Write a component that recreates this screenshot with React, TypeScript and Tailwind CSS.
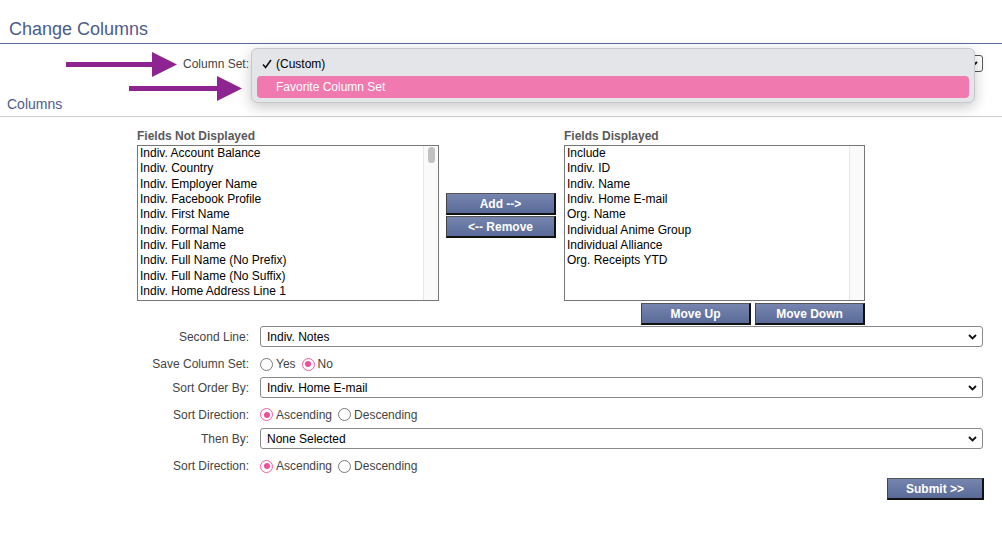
import React from "react";

const notDisplayed = [
  "Indiv. Account Balance",
  "Indiv. Country",
  "Indiv. Employer Name",
  "Indiv. Facebook Profile",
  "Indiv. First Name",
  "Indiv. Formal Name",
  "Indiv. Full Name",
  "Indiv. Full Name (No Prefix)",
  "Indiv. Full Name (No Suffix)",
  "Indiv. Home Address Line 1",
];

const displayed = [
  "Include",
  "Indiv. ID",
  "Indiv. Name",
  "Indiv. Home E-mail",
  "Org. Name",
  "Individual Anime Group",
  "Individual Alliance",
  "Org. Receipts YTD",
];

function Btn({ children, className = "" }: { children: React.ReactNode; className?: string }) {
  return (
    <button
      className={`h-[22px] border-solid border-t border-l border-r-2 border-b-2 border-t-[#555] border-l-[#444] border-r-[#111] border-b-[#111] bg-linear-to-b from-[#7585ae] to-[#5b6b99] text-white text-[12px] font-bold leading-none ${className}`}
    >
      {children}
    </button>
  );
}

function ListBox({ items, thumb, width }: { items: string[]; thumb?: boolean; width: string }) {
  return (
    <div className={`flex h-[156px] border border-[#767676] bg-white ${width}`}>
      <div className="flex-1 overflow-hidden pl-[2px] text-[12px] leading-[15.35px] text-black">
        {items.map((it) => (
          <div key={it} className="whitespace-nowrap">
            {it}
          </div>
        ))}
      </div>
      <div className="flex w-[15px] justify-center border-l border-[#e6e6e6] bg-[#fafafa] pt-[1px]">
        {thumb && <div className="h-[16px] w-[7px] rounded-full bg-[#c1c1c1]" />}
      </div>
    </div>
  );
}

function Chevron() {
  return (
    <svg width="9" height="6" viewBox="0 0 9 6">
      <path d="M1 1l3.5 3.5L8 1" fill="none" stroke="#111" strokeWidth="1.8" />
    </svg>
  );
}

function Select({ value, className = "" }: { value: string; className?: string }) {
  return (
    <div
      className={`flex h-[21px] items-center justify-between rounded-[3px] border border-[#8a8a8a] bg-white pl-[6px] pr-[5px] text-[12px] text-black ${className}`}
    >
      <span>{value}</span>
      <Chevron />
    </div>
  );
}

function Radio({ checked, label, className = "" }: { checked?: boolean; label: string; className?: string }) {
  return (
    <span className={`flex items-center ${className}`}>
      {checked ? (
        <span className="flex h-[13px] w-[13px] items-center justify-center rounded-full border-[1.5px] border-[#ee5fa2] bg-white">
          <span className="h-[6px] w-[6px] rounded-full bg-[#ec4f98]" />
        </span>
      ) : (
        <span className="h-[13px] w-[13px] rounded-full border border-[#7a7a7a] bg-white" />
      )}
      <span className="ml-[3px] text-[#444]">{label}</span>
    </span>
  );
}

function Label({ children }: { children: React.ReactNode }) {
  return <div className="w-[249px] text-right text-[#444]">{children}</div>;
}

export default function App() {
  return (
    <div className="relative h-[555px] w-full overflow-hidden bg-white font-['Liberation_Sans',Arial,sans-serif] text-[12px]">
      <h1 className="border-b border-[#5b6a98] pb-[3px] pl-[9px] pt-[18px] text-[18px] leading-[22px] text-[#4d5c8c]">
        Change Columns
      </h1>

      {/* column set row */}
      <div className="mt-[11px] flex h-[17px] items-center">
        <Label>Column Set:</Label>
        <div className="ml-[4px] flex h-[17px] w-[730px] items-center justify-end rounded-[3px] border border-[#555] bg-white pr-[4px]">
          <Chevron />
        </div>
      </div>

      <h2 className="mt-[24px] border-b border-[#cccccc] pb-[4px] pl-[7px] text-[14px] leading-[16px] text-[#4d5c8c]">
        Columns
      </h2>

      {/* field lists */}
      <div className="mt-[12px] flex pl-[137px]">
        <div>
          <div className="text-[12px] font-bold leading-[14px] text-[#5a5a5a]">Fields Not Displayed</div>
          <div className="mt-[2px]">
            <ListBox items={notDisplayed} thumb width="w-[302px]" />
          </div>
        </div>
        <div className="ml-[7px] mt-[64px] flex w-[110px] flex-col gap-[1px]">
          <Btn>Add --&gt;</Btn>
          <Btn>&lt;-- Remove</Btn>
        </div>
        <div className="ml-[8px]">
          <div className="text-[12px] font-bold leading-[14px] text-[#5a5a5a]">Fields Displayed</div>
          <div className="mt-[2px]">
            <ListBox items={displayed} width="w-[301px]" />
          </div>
          <div className="mt-[2px] flex justify-end gap-[4px]">
            <Btn className="w-[110px]">Move Up</Btn>
            <Btn className="w-[110px]">Move Down</Btn>
          </div>
        </div>
      </div>

      {/* options */}
      <div className="mt-[1px]">
        <div className="flex h-[21px] items-center">
          <Label>Second Line:</Label>
          <Select className="ml-[11px] w-[723px]" value="Indiv. Notes" />
        </div>
        <div className="flex h-[30px] items-center pt-[4px]">
          <Label>Save Column Set:</Label>
          <div className="ml-[11px] flex">
            <Radio label="Yes" />
            <Radio checked label="No" className="ml-[6px]" />
          </div>
        </div>
        <div className="flex h-[21px] items-center">
          <Label>Sort Order By:</Label>
          <Select className="ml-[11px] w-[723px]" value="Indiv. Home E-mail" />
        </div>
        <div className="flex h-[30px] items-center pt-[3px]">
          <Label>Sort Direction:</Label>
          <div className="ml-[11px] flex">
            <Radio checked label="Ascending" />
            <Radio label="Descending" className="ml-[6px]" />
          </div>
        </div>
        <div className="flex h-[21px] items-center">
          <Label>Then By:</Label>
          <Select className="ml-[11px] w-[723px]" value="None Selected" />
        </div>
        <div className="flex h-[29px] items-center pt-[5px]">
          <Label>Sort Direction:</Label>
          <div className="ml-[11px] flex">
            <Radio checked label="Ascending" />
            <Radio label="Descending" className="ml-[6px]" />
          </div>
        </div>
        <div className="flex justify-end pr-[18px]">
          <Btn className="w-[97px]">Submit &gt;&gt;</Btn>
        </div>
      </div>

      {/* open dropdown menu */}
      <div className="absolute left-[251px] top-[48px] w-[724px] rounded-[6px] border border-[#c6c8cc] bg-[#e3e5e9] pb-[4px] pt-[4px] shadow-[0_4px_14px_rgba(0,0,0,0.22)]">
        <div className="mx-[5px] flex h-[22px] items-center pl-[5px] text-[12px] text-black">
          <svg width="10" height="10" viewBox="0 0 10 10" className="mr-[4px]">
            <path d="M1 5.5l2.6 3L9 1" fill="none" stroke="#111" strokeWidth="1.6" />
          </svg>
          (Custom)
        </div>
        <div className="mx-[5px] mt-[1px] flex h-[22px] items-center rounded-[4px] bg-[#f07ab0] pl-[19px] text-[12px] text-white">
          Favorite Column Set
        </div>
      </div>

      {/* annotation arrows */}
      <svg className="absolute left-0 top-0" width="260" height="110" viewBox="0 0 260 110">
        <rect x="66" y="62" width="88" height="5" fill="#8e2491" />
        <polygon points="152,52 177,64.5 152,77" fill="#8e2491" />
        <rect x="129" y="86" width="90" height="5" fill="#8e2491" />
        <polygon points="217,76 242,88.5 217,101" fill="#8e2491" />
      </svg>
    </div>
  );
}
